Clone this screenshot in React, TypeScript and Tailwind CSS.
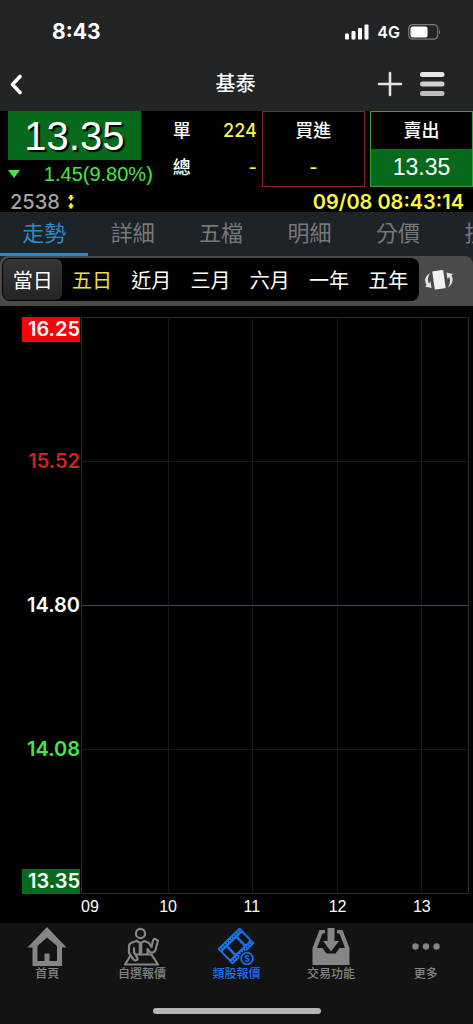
import { ReactNode, useState } from "react"

interface NavItem {
    label: string;
    icon: ReactNode;
}

const tabs = ["走勢", "詳細", "五檔", "明細", "分價", "技術"]

const ranges = ["當日", "五日", "近月", "三月", "六月", "一年", "五年"]

const hours = ["09", "10", "11", "12", "13"]

const HomeIcon = () => (
    <svg width="40" height="40" viewBox="0 0 40 40" fill="currentColor">
        <path fillRule="evenodd" d="M20 0 39.500 20.500H35V39H5.500V20.500H0.500ZM20 10.500 10.500 19V34H17.500V26.500H22.500V34H30V19Z" />
    </svg>
)

const AnalystIcon = () => (
    <svg width="40" height="40" viewBox="0 0 40 40" fill="none" stroke="currentColor" strokeWidth="2.200" strokeLinejoin="round" strokeLinecap="round">
        <circle cx="18.500" cy="6.500" r="4.600" />
        <path d="M14.500 14 10 15.500Q7 16.500 7 20V26L11.500 32.500Q13.500 34.500 15.500 32.500 16 31 12 25.500V21" />
        <path d="M14.500 14 18.500 16 22.500 14 27 16 29.500 20 31 13.500Q32 11 34 12.500L36 13.500 33.500 23Q31.500 27 28 25L25.500 22V27" />
        <path d="M18.500 17V25.500" strokeWidth="3.600" />
        <path d="M15 27.500H29.500L36 37.500H3L8 29.500" />
    </svg>
)

const FilmIcon = () => (
    <svg width="40" height="40" viewBox="0 0 40 40">
        <g transform="rotate(-44 20 19)">
            <rect x="4.500" y="8" width="31" height="22" rx="1" fill="currentColor" />
            <path d="M6.500 10.500H34M6.500 27.500H34" stroke="#131313" strokeWidth="1.300" strokeDasharray="1.200 1.800" />
            <g fill="#131313">
                <rect x="6.500" y="13.500" width="5.500" height="11" rx="1" />
                <rect x="14.500" y="13.500" width="11" height="11" rx="1" />
                <rect x="28" y="13.500" width="5.500" height="11" rx="1" />
            </g>
        </g>
        <circle cx="31" cy="31.500" r="8" fill="#131313" />
        <circle cx="31" cy="31.500" r="5.800" fill="none" stroke="currentColor" strokeWidth="1.800" />
        <path d="M33 29.500Q31 28 29.500 29.300 28.800 30.800 31 31.500 33.500 32.300 32.500 33.700 31 35 29 33.500" fill="none" stroke="currentColor" strokeWidth="1.500" />
    </svg>
)

const TradeIcon = () => (
    <svg width="40" height="40" viewBox="0 0 40 40" fill="currentColor">
        <path d="M8.500 3H14V6.500H11.500L6 21H11.500L15.500 26.500H24.500L28.500 21H34L28.500 6.500H26V3H31.500L38.500 21V38H1.500V21Z" />
        <path d="M16.500 1H23.500V14H28L20 24.500 12 14H16.500Z" />
    </svg>
)

const MoreIcon = () => (
    <svg width="40" height="40" viewBox="0 0 40 40" fill="currentColor">
        <circle cx="9.500" cy="19.500" r="3.200" />
        <circle cx="20" cy="19.500" r="3.200" />
        <circle cx="30.500" cy="19.500" r="3.200" />
    </svg>
)

const navItems: NavItem[] = [
    { label: "首頁", icon: <HomeIcon /> },
    { label: "自選報價", icon: <AnalystIcon /> },
    { label: "類股報價", icon: <FilmIcon /> },
    { label: "交易功能", icon: <TradeIcon /> },
    { label: "更多", icon: <MoreIcon /> },
]

const StatusBar = () => (
    <div className="flex h-[60px] items-center justify-between pl-[52px] pr-8 pt-1">
        <span className="text-[21px] leading-6 font-bold">8:43</span>
        <div className="flex items-center gap-2">
            <svg width="24" height="16" viewBox="0 0 24 16" fill="currentColor">
                <rect x="0" y="9.500" width="4" height="6" rx="1" />
                <rect x="6.500" y="7" width="4" height="8.500" rx="1" />
                <rect x="13" y="4" width="4" height="11.500" rx="1" />
                <rect x="19.500" y="0.500" width="4" height="15" rx="1" />
            </svg>
            <span className="text-base leading-4 font-semibold">4G</span>
            <svg width="33" height="16" viewBox="0 0 33 16">
                <rect x="0.700" y="0.700" width="29" height="14.500" rx="4" fill="none" stroke="#77797a" strokeWidth="1.200" />
                <rect x="2.500" y="2.500" width="17" height="11" rx="2" fill="#fff" />
                <path d="M31 5.500Q33 8 31 10.500Z" fill="#77797a" />
            </svg>
        </div>
    </div>
)

const Header = () => (
    <header className="grid h-[51px] grid-cols-3 items-center pl-2 pr-7 pb-[3px]">
        <button aria-label="返回" className="w-8">
            <svg width="16" height="22" viewBox="0 0 16 22" fill="none" stroke="#fff" strokeWidth="3.600" strokeLinecap="round" strokeLinejoin="round">
                <path d="M12 3.500 4.500 11.500 12 19.500" />
            </svg>
        </button>
        <h1 className="pl-[18px] text-center text-xl font-medium">基泰</h1>
        <div className="flex items-center justify-end gap-4">
            <button aria-label="加入自選">
                <svg width="26" height="26" viewBox="0 0 26 26" stroke="#e4e4e4" strokeWidth="2.600" strokeLinecap="round">
                    <path d="M13 2V24M2 13H24" />
                </svg>
            </button>
            <button aria-label="選單">
                <svg width="26" height="26" viewBox="0 0 26 26" strokeWidth="5" strokeLinecap="round">
                    <path d="M3.500 3.500H23" stroke="#e8e8e8" />
                    <path d="M3.500 13H23" stroke="#cfcfcf" />
                    <path d="M3.500 22.500H23" stroke="#bdbdbd" />
                </svg>
            </button>
        </div>
    </header>
)

const Quote = () => (
    <section className="bg-black">
        <div className="flex h-[76px]">
            <div className="w-[34%]">
                <div className="ml-2 mr-5 flex h-[49px] items-center justify-center bg-[#07691b] font-[Liberation_Sans,sans-serif] text-[40px] leading-none [text-shadow:2px_2px_1px_#000]">13.35</div>
                <div className="flex h-[27px] items-center justify-between pl-2 pr-2 font-[Liberation_Sans,sans-serif] text-xl text-[#42e943]">
                    <svg width="12" height="8" viewBox="0 0 12 8" fill="currentColor">
                        <path d="M0 0H12L6 8Z" />
                    </svg>
                    1.45(9.80%)
                </div>
            </div>
            <dl className="grid flex-1 grid-cols-[auto_1fr] grid-rows-2 items-center pl-3 pr-[5px] pt-px text-lg font-medium">
                <dt>單</dt>
                <dd className="text-right text-[#f8f840]">224</dd>
                <dt>總</dt>
                <dd className="text-right text-[#f8f840]">-</dd>
            </dl>
            <button className="mr-[5px] grid w-[21.8%] grid-rows-2 items-center border border-[#8a2426] text-lg font-medium">
                <span>買進</span>
                <span className="text-[#f8f840]">-</span>
            </button>
            <button className="grid w-[21.8%] grid-rows-2 border border-[#35a03a] text-lg font-medium">
                <span className="flex items-center justify-center">賣出</span>
                <span className="flex items-center justify-center bg-[#07691b] font-[Liberation_Sans,sans-serif] text-[23px] leading-none font-normal">13.35</span>
            </button>
        </div>
        <div className="flex h-[25px] items-center justify-between pl-[10px] pr-[9px] pt-1 text-xl leading-5 font-medium">
            <div className="flex items-center gap-2 text-[#a3a3a8]">
                2538
                <svg width="6" height="14" viewBox="0 0 6 14" fill="#f5ef2c">
                    <path d="M1.500 0H4.500V2H6L3 6 0 2H1.500ZM3 7.500 6 11.500H4.500V13.500H1.500V11.500H0Z" />
                </svg>
            </div>
            <time className="font-semibold text-[#f8f840]">09/08 08:43:14</time>
        </div>
    </section>
)

const Chart = () => (
    <section className="flex flex-1 flex-col bg-black pl-[22px] pr-1 pt-[11px]">
        <div className="flex flex-1">
            <div className="grid w-[59px] grid-rows-[1fr_2fr_2fr_2fr_1fr] items-center text-right text-xl leading-[25px] font-semibold">
                <span className="mr-px self-start bg-[#fb0007]">16.25</span>
                <span className="mr-px text-[#d42020]">15.52</span>
                <span className="mr-px">14.80</span>
                <span className="mr-px text-[#42e943]">14.08</span>
                <span className="mr-px self-end bg-[#07691b]">13.35</span>
            </div>
            <div className="grid flex-1 grid-cols-[87fr_84fr_85fr_84fr_47fr] grid-rows-4 border-r border-b border-[#2b2b2b]">
                {Array.from({ length: 20 }, (_, i) => {
                    const row = Math.floor(i / 5)
                    const top = row === 0 ? "border-t-[#2b2b2b]" : row === 2 ? "border-t-[#34485c]" : "border-t-[#191919]"
                    const left = i % 5 === 0 ? "border-l-[#2b2b2b]" : "border-l-[#191919]"
                    return <div key={i} className={`border-t border-l ${top} ${left}`} />
                })}
            </div>
        </div>
        <div className="ml-[59px] grid h-[29px] grid-cols-[87fr_84fr_85fr_84fr_47fr] pt-1 font-[Liberation_Sans,sans-serif] text-base leading-[18px]">
            {hours.map((hour, i) => (
                <span key={hour} className={i === 0 ? "" : "-ml-[9px]"}>{hour}</span>
            ))}
        </div>
    </section>
)

const App = () => {

    const [tab, setTab] = useState("走勢")
    const [range, setRange] = useState("當日")

    return (
        <main className="flex min-h-screen flex-col overflow-x-hidden bg-[#222426] font-[Inter,'Noto_Sans_CJK_TC',sans-serif] text-white">
            <StatusBar />
            <Header />
            <Quote />

            {/* the last tab runs past the edge, the strip scrolls sideways */}
            <div className="flex h-11 overflow-x-auto overflow-y-hidden bg-[#1e2327] [scrollbar-width:none]">
                {tabs.map((name) => (
                    <button
                        key={name}
                        onClick={() => setTab(name)}
                        className={`w-[18.7%] shrink-0 border-b-[3px] text-[22px] leading-none ${tab === name ? "border-[#2c83bd] text-[#2c8bca]" : "border-transparent text-[#75797c]"}`}
                    >
                        {name}
                    </button>
                ))}
            </div>

            <div className="flex h-[50px] rounded-t-lg bg-[#4a4a4a] pt-0.5 pb-[5px] pl-0.5">
                <div className="flex flex-1 rounded-lg bg-black p-px">
                    {ranges.map((name) => (
                        <button
                            key={name}
                            onClick={() => setRange(name)}
                            className={`flex-1 rounded-md pt-0.5 text-xl leading-none ${range === name ? "bg-linear-to-b from-[#363636] to-[#242424]" : ""} ${name === "五日" ? "text-[#f0dc50]" : ""}`}
                        >
                            {name}
                        </button>
                    ))}
                </div>
                <button aria-label="旋轉畫面" className="w-[54px] pl-[5px]">
                    <svg width="30" height="24" viewBox="0 0 30 24">
                        <rect x="9.500" y="2.500" width="11" height="18.500" rx="1" fill="#f1f1f1" transform="rotate(-8 15 12)" />
                        <path d="M6 5Q-1.500 10 2.500 17L1 18.500 7.500 20 6.500 13.500 5 15.500Q2.500 10.500 6 5Z" fill="#e4e4e4" />
                        <path d="M24 19.500Q31 14 27.500 7.500L29 6 22.500 4.500 23.500 11 25.200 9Q27.500 14 24 19.500Z" fill="#e4e4e4" />
                    </svg>
                </button>
            </div>

            <Chart />

            <footer className="flex h-[101px] flex-col justify-between bg-[#131313] pb-[10px]">
                <nav className="grid grid-cols-5 pt-1">
                    {navItems.map((item) => (
                        <a
                            key={item.label}
                            href="#"
                            className={`flex flex-col items-center text-xs leading-[14px] font-medium ${item.label === "類股報價" ? "text-[#1872e8]" : "text-[#858585]"}`}
                        >
                            {item.icon}
                            {item.label}
                        </a>
                    ))}
                </nav>
                <div className="mx-auto h-1.5 w-[168px] rounded-full bg-[#b5b5b5]" />
            </footer>
        </main>
    )
}

export default App
